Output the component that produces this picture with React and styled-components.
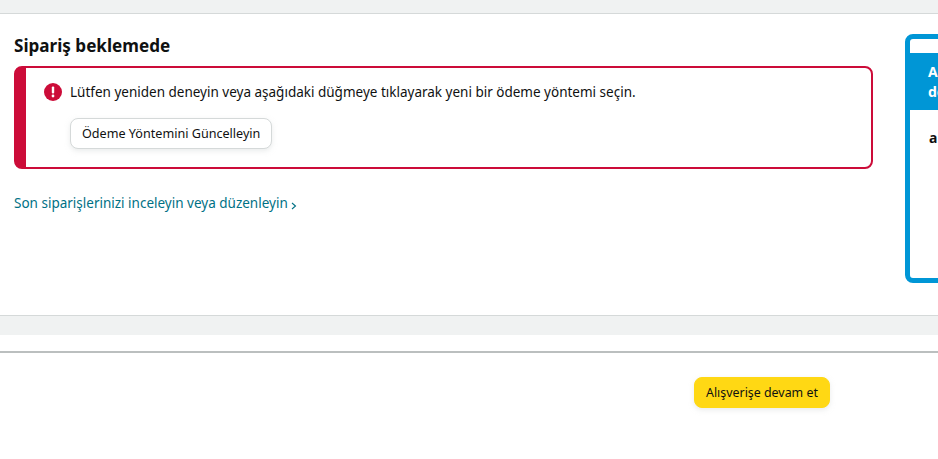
import React from "react";
import styled, { createGlobalStyle } from "styled-components";

const Global = createGlobalStyle`
  html, body { margin: 0; padding: 0; background: #fff; overflow: hidden; }
  body { width: 938px; height: 459px; font-family: "Noto Sans", Roboto, "Liberation Sans", sans-serif; color: #0f1111; }
`;
const Page = styled.div`width: 938px; height: 459px; overflow: hidden; display: flex; flex-direction: column;`;
const Band = styled.div`
  flex: none; background: #f0f2f2; height: ${p => p.$h}px;
  border-${p => p.$side}: 1px solid #d5d9d9;
`;
const Main = styled.main`
  flex: none; height: 301px; box-sizing: border-box; padding: 20px 0 0 14px;
  display: flex; gap: 32px; align-items: flex-start;
`;
const Column = styled.section`flex: none; width: 859px;`;
const Title = styled.h1`margin: 0; font-size: 17.1px; line-height: 24px; font-weight: 700;`;
const Alert = styled.div`
  margin-top: 8px; height: 103px; box-sizing: border-box;
  border: 2px solid #cc0c39; border-left-width: 12px; border-radius: 8px;
  padding: 12px 18px;
`;
const Message = styled.div`display: flex; align-items: center; gap: 8px; height: 24px; font-size: 13.5px;`;
const IconWrap = styled.svg`flex: none; width: 18px; height: 18px;`;
const Btn = styled.button`
  display: block; font-family: inherit; color: #0f1111; font-size: ${p => p.$primary ? 12.4 : 12.6}px;
  height: 31px; border-radius: 8px; padding: 0 11px;
  background: ${p => p.$primary ? "#ffd814" : "#fff"};
  border: 1px solid ${p => p.$primary ? "#ffd814" : "#d5d9d9"};
  box-shadow: 0 2px 5px rgba(213,217,217,.5);
`;
const Actions = styled.div`margin: 14px 0 0 26px;`;
const LinkRow = styled.a`
  display: flex; align-items: center; gap: 3px; margin-top: 24px; font-size: 13.5px; line-height: 20px; color: #007185;
`;
const Chevron = styled.svg`width: 6px; height: 8px; margin-top: 6px;`;
const Card = styled.aside`
  flex: none; width: 300px; height: 249px; box-sizing: border-box;
  border: 5px solid #0096d6; border-radius: 8px; padding-top: 14px;
`;
const CardHead = styled.div`
  background: #0096d6; color: #fff; height: 57px; box-sizing: border-box; padding: 9px 0 0 18px;
  font-size: 14px; font-weight: 700; line-height: 20px;
`;
const CardBody = styled.div`padding: 18px 0 0 19px; font-size: 14px; font-weight: 700; line-height: 20px;`;
const Rule = styled.div`flex: none; height: 16px; border-bottom: 2px solid #bbbfbf;`;
const Footer = styled.footer`flex: none; padding: 24px 0 0 694px;`;

export default function App() {
  return (
    <Page>
      <Global />
      <Band $h={13} $side="bottom" />
      <Main>
        <Column>
          <Title>Sipariş beklemede</Title>
          <Alert>
            <Message>
              <IconWrap viewBox="0 0 18 18">
                <circle cx="9" cy="9" r="9" fill="#cc0c39" />
                <rect x="7.8" y="3.5" width="2.4" height="7" rx="1" fill="#fff" />
                <circle cx="9" cy="13" r="1.4" fill="#fff" />
              </IconWrap>
              Lütfen yeniden deneyin veya aşağıdaki düğmeye tıklayarak yeni bir ödeme yöntemi seçin.
            </Message>
            <Actions><Btn>Ödeme Yöntemini Güncelleyin</Btn></Actions>
          </Alert>
          <LinkRow>
            Son siparişlerinizi inceleyin veya düzenleyin
            <Chevron viewBox="0 0 6 8"><path d="M1 1l3.5 3L1 7" fill="none" stroke="#007185" strokeWidth="1.1" /></Chevron>
          </LinkRow>
        </Column>
        <Card>
          <CardHead>A<br />de</CardHead>
          <CardBody>a</CardBody>
        </Card>
      </Main>
      <Band $h={19} $side="top" />
      <Rule />
      <Footer><Btn $primary>Alışverişe devam et</Btn></Footer>
    </Page>
  );
}
